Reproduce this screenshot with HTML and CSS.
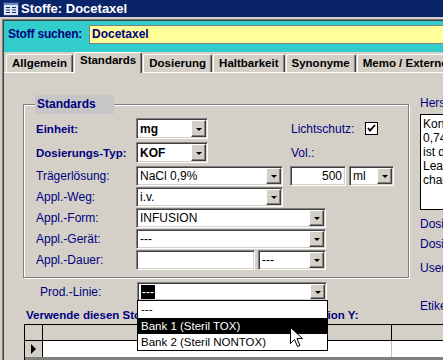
FILE: index.html
```html
<!DOCTYPE html>
<html lang="de">
<head>
<meta charset="utf-8">
<title>Stoffe: Docetaxel</title>
<link rel="stylesheet" href="styles.css">
</head>
<body>
<div class="titlebar">
  <svg class="app-icon" viewBox="0 0 16 14" width="16" height="14">
    <rect x="0.5" y="0.5" width="15" height="13" fill="#dfe6f5" stroke="#2c3c7c"/>
    <rect x="1" y="1" width="14" height="2" fill="#6c84c8"/>
    <path d="M3 5.5h4M3 8h4M3 10.5h4M9 5.5h4M9 8h4M9 10.5h4" stroke="#1c2c6c" stroke-width="1"/>
  </svg>
  <span>Stoffe: Docetaxel</span>
</div>
<div class="window">
<div class="frame">
<div class="client">

  <div class="search">
    <span class="search-label">Stoff suchen:</span>
    <div class="search-box">Docetaxel</div>
  </div>

  <div class="tabs">
    <div class="tab">Allgemein</div>
    <div class="tab active">Standards</div>
    <div class="tab">Dosierung</div>
    <div class="tab">Haltbarkeit</div>
    <div class="tab">Synonyme</div>
    <div class="tab">Memo / Externe Daten</div>
  </div>

  <div class="page">
    <div class="main">
      <div class="left">
        <div class="group">
          <div class="group-title">Standards</div>

          <div class="row tall">
            <span class="lbl strong">Einheit:</span>
            <div class="slot">
              <div class="combo w72"><span class="val strong-val">mg</span><span class="drop"></span></div>
            </div>
            <span class="lbl side-lbl">Lichtschutz:</span>
            <span class="check"><svg viewBox="0 0 11 11" width="11" height="11"><path d="M2 5l2 2.5 5-5.5" fill="none" stroke="#000" stroke-width="1.8"/></svg></span>
          </div>

          <div class="row tall">
            <span class="lbl strong">Dosierungs-Typ:</span>
            <div class="slot">
              <div class="combo w72"><span class="val strong-val">KOF</span><span class="drop"></span></div>
            </div>
            <span class="lbl side-lbl">Vol.:</span>
          </div>

          <div class="row">
            <span class="lbl">Trägerlösung:</span>
            <div class="combo w147"><span class="val">NaCl 0,9%</span><span class="drop"></span></div>
            <div class="field num w56">500</div>
            <div class="combo w45"><span class="val">ml</span><span class="drop"></span></div>
          </div>

          <div class="row">
            <span class="lbl">Appl.-Weg:</span>
            <div class="combo w147"><span class="val">i.v.</span><span class="drop"></span></div>
          </div>

          <div class="row">
            <span class="lbl">Appl.-Form:</span>
            <div class="combo w190"><span class="val">INFUSION</span><span class="drop"></span></div>
          </div>

          <div class="row">
            <span class="lbl">Appl.-Gerät:</span>
            <div class="combo w190"><span class="val">---</span><span class="drop"></span></div>
          </div>

          <div class="row">
            <span class="lbl">Appl.-Dauer:</span>
            <div class="field w119"></div>
            <div class="combo w68"><span class="val">---</span><span class="drop"></span></div>
          </div>
        </div>

        <div class="row prod">
          <span class="lbl">Prod.-Linie:</span>
          <div class="combo w190 open">
            <span class="val"><span class="sel">---</span></span><span class="drop"></span>
            <ul class="droplist">
              <li>---</li>
              <li class="hot">Bank 1 (Steril TOX)</li>
              <li>Bank 2 (Steril NONTOX)</li>
            </ul>
            <svg class="pointer" viewBox="0 0 13 21" width="13" height="21">
              <path d="M0.5 0.5v16l4-4 3 7 2.5-1-3-7h5.5z" fill="#fff" stroke="#000" stroke-width="1"/>
            </svg>
          </div>
        </div>
      </div>

      <div class="side">
        <div class="side-lbl2">Herstellungshinweis:</div>
        <div class="memo">Konzentration<br>0,74 mg/ml<br>ist die Obergrenze<br>Lea<br>chargenabhängig</div>
        <div class="side-lbl2 gap7">Dosierung:</div>
        <div class="side-lbl2 gap6">Dosis:</div>
        <div class="side-lbl2 gap10">User:</div>
        <div class="side-lbl2 gap24">Etikett:</div>
      </div>
    </div>

    <div class="list-title">Verwende diesen Stoff in folgenden Bereichen von Station Y:</div>
    <div class="sheet">
      <div class="sheet-row sheet-head">
        <span class="selector"></span><span class="cell"></span><span class="cell"></span>
      </div>
      <div class="sheet-row sheet-data">
        <span class="selector"><span class="arrow"></span></span><span class="cell"></span><span class="cell"></span>
      </div>
      <div class="sheet-foot"></div>
    </div>
  </div>

</div>
</div>
</div>
</body>
</html>
```

FILE: styles.css
```css
* { box-sizing: border-box; }
body { margin: 0; width: 443px; height: 360px; overflow: hidden; background: #d4d0c8; font-family: "Liberation Sans", Arial, sans-serif; font-size: 12px; color: #000; }

/* title bar + window frame */
.titlebar { height: 17px; background: #0a246a; color: #fff; display: flex; align-items: center; gap: 2px; padding-left: 3px; font-weight: bold; font-size: 13px; white-space: nowrap; }
.app-icon { flex: none; }
.window { padding: 2px 0 0 2px; }
.frame { border-top: 1px solid #808080; border-left: 1px solid #808080; }
.client { border-top: 1px solid #404040; border-left: 1px solid #404040; }

/* search strip */
.search { height: 31px; background: #33cccc; display: flex; align-items: flex-start; padding: 4px 0 0 4px; }
.search-label { flex: none; width: 81px; line-height: 19px; font-weight: bold; font-size: 12px; color: #000080; white-space: nowrap; letter-spacing: -0.2px; }
.search-box { flex: 1; margin-right: -20px; height: 19px; background: #ffff99; border: 1px solid #808080; padding-left: 2px; line-height: 17px; font-weight: bold; font-size: 12px; color: #000080; white-space: nowrap; }

/* tabs */
.tabs { height: 20px; display: flex; align-items: flex-end; gap: 1px; padding-left: 2px; white-space: nowrap; }
.tab { flex: none; height: 18px; padding: 0 5px; line-height: 16px; font-weight: bold; font-size: 11.5px; border: 1px solid; border-bottom: none; border-color: #fff #404040 #fff #fff; box-shadow: inset -1px 0 #808080; border-radius: 2px 2px 0 0; }
.tab.active { height: 21px; margin-bottom: -1px; position: relative; z-index: 1; background: #d4d0c8; line-height: 15px; }

/* page */
.page { border-top: 1px solid #fff; }
.main { display: flex; height: 235px; }
.left { flex: none; }

.group { position: relative; width: 386px; height: 174px; margin: 31px 0 0 19px; border: 1px solid #808080; box-shadow: inset 1px 1px #fff, 1px 1px #fff; padding: 13px 0 0 12px; }
.group-title { position: absolute; top: -10px; left: 11px; width: 79px; height: 19px; background: #c6c6c6; padding-left: 2px; line-height: 18px; font-weight: bold; color: #000080; }

.row { display: flex; align-items: center; height: 20px; margin-bottom: 1px; white-space: nowrap; }
.row.tall { height: 21px; margin-bottom: 3px; }
.lbl { flex: none; width: 100px; color: #000080; }
.lbl.strong { font-weight: bold; font-size: 11.5px; }
.slot { flex: none; width: 155px; }
.side-lbl { width: 74px; }

/* controls */
.combo, .field { position: relative; flex: none; height: 100%; background: #fff; border: 1px solid; border-color: #808080 #fff #fff #808080; box-shadow: inset 1px 1px #404040, inset -1px -1px #d4d0c8; display: flex; align-items: center; }
.val { flex: 1; padding-left: 3px; overflow: hidden; }
.strong-val { font-weight: bold; }
.drop { flex: none; align-self: stretch; width: 15px; margin: 1px 1px 1px 0; background: #d4d0c8; border: 1px solid; border-color: #fff #404040 #404040 #fff; box-shadow: inset -1px -1px #808080; display: flex; align-items: center; justify-content: center; }
.drop::after { content: ""; border-style: solid; border-width: 3px 3px 0; border-color: #000 transparent transparent; margin-top: 1px; }
.field.num { justify-content: flex-end; padding-right: 3px; }
.w45 { width: 45px; margin-left: 3px; }
.w56 { width: 56px; margin-left: 7px; }
.w68 { width: 68px; margin-left: 3px; }
.w72 { width: 72px; height: 21px; }
.w119 { width: 119px; }
.w147 { width: 147px; }
.w190 { width: 190px; }

.check { flex: none; width: 13px; height: 13px; background: #fff; border: 1px solid #000; display: flex; align-items: center; justify-content: center; }

/* production line with open list */
.row.prod { margin: 4px 0 0 36px; height: 19px; }
.prod .lbl { width: 97px; }
.sel { background: #000; color: #fff; padding: 0 1px; }
.droplist { position: absolute; z-index: 5; top: 100%; left: -1px; width: 191px; margin: 0; padding: 0; list-style: none; background: #fff; border: 1px solid #000; font-size: 11.5px; }
.droplist li { height: 16px; line-height: 16px; padding-left: 3px; }
.droplist li:first-child { height: 17px; }
.droplist li.hot { background: #000; color: #fff; }
.pointer { position: absolute; z-index: 6; left: 152px; top: 44px; }

/* right column */
.side { flex: none; margin: 23px 0 0 11px; width: 60px; white-space: nowrap; }
.side-lbl2 { line-height: 14px; color: #000080; }
.memo { margin-top: 4px; width: 60px; height: 96px; background: #fff; border: 1px solid #000; padding: 2px 0 0 2px; line-height: 14px; overflow: hidden; }
.gap6 { margin-top: 6px; }
.gap7 { margin-top: 7px; }
.gap10 { margin-top: 10px; }
.gap24 { margin-top: 24px; }

/* datasheet */
.list-title { margin-left: 22px; line-height: 14px; font-weight: bold; font-size: 11.5px; color: #000080; white-space: nowrap; }
.sheet { margin: 2px 0 0 20px; width: 460px; border-top: 1px solid #000; border-left: 1px solid #000; }
.sheet-row { display: flex; height: 16px; }
.sheet-head { background: #d4d0c8; border-bottom: 1px solid #000; height: 16px; }
.sheet-data { background: #fff; }
.selector { flex: none; width: 18px; background: #d4d0c8; border-right: 1px solid #000; display: flex; align-items: center; justify-content: center; }
.cell { flex: none; width: 349px; border-right: 1px solid #000; }
.sheet-data .cell { border-right-color: #c0c0c0; }
.arrow { border-style: solid; border-width: 5px 0 5px 5px; border-color: transparent transparent transparent #000; }
.sheet-foot { height: 4px; background: #808080; }
```
